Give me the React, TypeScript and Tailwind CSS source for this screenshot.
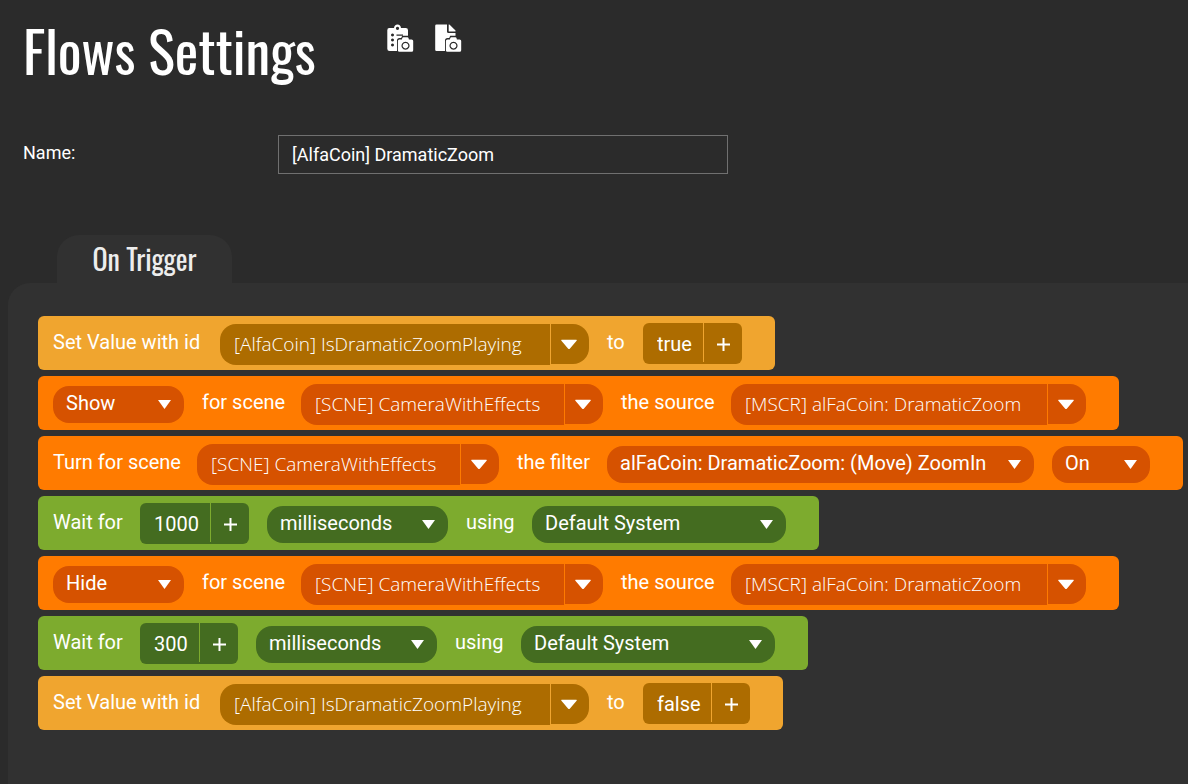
import React from "react";

type Tone = "amber" | "orange" | "green";

const rowTone: Record<Tone, string> = {
  amber: "bg-[#f0a52f]",
  orange: "bg-[#ff7b00]",
  green: "bg-[#7dab2e]",
};

const fieldTone: Record<Tone, string> = {
  amber: "bg-[#ad6c00]",
  orange: "bg-[#d65200]",
  green: "bg-[#446c20]",
};

const dividerTone: Record<Tone, string> = {
  amber: "border-[#f0a52f]",
  orange: "border-[#ff7b00]",
  green: "border-[#7dab2e]",
};

const ToneContext = React.createContext<Tone>("amber");

function Row({ tone, children }: { tone: Tone; children: React.ReactNode }) {
  return (
    <ToneContext.Provider value={tone}>
      <li
        className={`flex h-[54px] w-max items-center gap-[18px] rounded-md pr-[33px] pl-[15px] ${rowTone[tone]}`}
      >
        {children}
      </li>
    </ToneContext.Provider>
  );
}

function Word({ width, children }: { width: string; children: React.ReactNode }) {
  return <span className={`pb-0.5 whitespace-nowrap ${width}`}>{children}</span>;
}

function Select({ label, value, width }: { label: string; value: string; width: string }) {
  const tone = React.useContext(ToneContext);
  return (
    <span className="relative flex items-center pt-0.5">
      <select
        aria-label={label}
        defaultValue={value}
        className={`h-[37px] appearance-none rounded-[16px] pb-0.5 pl-[13px] text-white outline-none ${width} ${fieldTone[tone]}`}
      >
        <option>{value}</option>
      </select>
      <svg
        viewBox="0 0 13 9"
        className="pointer-events-none absolute right-[13px] h-[9px] w-[13px] fill-white"
        aria-hidden="true"
      >
        <path d="M0 0h13L6.5 9z" />
      </svg>
    </span>
  );
}

function Combo({ label, value, width }: { label: string; value: string; width: string }) {
  const tone = React.useContext(ToneContext);
  return (
    <span className="flex items-start pt-0.5">
      <input
        aria-label={label}
        defaultValue={value}
        className={`h-[41px] rounded-l-[16px] pl-3.5 font-['Segoe_UI','Open_Sans',sans-serif] text-[19px] font-light text-white outline-none ${width} ${fieldTone[tone]}`}
      />
      <button
        type="button"
        aria-label={`Choose ${label}`}
        className={`flex h-10 w-[39px] items-center justify-center rounded-r-[16px] border-l pt-0.5 pr-0.5 ${fieldTone[tone]} ${dividerTone[tone]}`}
      >
        <svg viewBox="0 0 18 11" className="h-[11px] w-[18px] fill-white" aria-hidden="true">
          <path d="M1.8 0.8h14.4q1.2 0 .4 1L10 9.6q-1 1-2 0L1.4 1.8q-.8-1 .4-1z" />
        </svg>
      </button>
    </span>
  );
}

function Value({ label, value, width }: { label: string; value: string; width: string }) {
  const tone = React.useContext(ToneContext);
  return (
    <span className={`flex h-[41px] overflow-hidden rounded-md ${fieldTone[tone]}`}>
      <input
        aria-label={label}
        defaultValue={value}
        className={`bg-transparent pt-0.5 pl-3.5 text-white outline-none ${width}`}
      />
      <button
        type="button"
        aria-label={`Add to ${label}`}
        className={`flex h-[39px] w-[39px] items-center justify-center border-l ${dividerTone[tone]}`}
      >
        <svg viewBox="0 0 13 13" className="mt-1 h-[13px] w-[13px] fill-white" aria-hidden="true">
          <path d="M5.5 0h2v5.5H13v2H7.5V13h-2V7.5H0v-2h5.5z" />
        </svg>
      </button>
    </span>
  );
}

function Camera() {
  return (
    <>
      <path
        d="M10 16.500 q0-2.500 2.500-2.500 h1.700 l1-2.200 h6.600 l1 2.200 H28 V29 H10z"
        fill="#2b2b2b"
      />
      <path
        fillRule="evenodd"
        d="M15.300 14.100 q.3-.8 1-.8 h4.200 q.7 0 1 .8 l.4 1.400 h2.700 q1.600 0 1.600 1.600 V26.300 q0 1.500-1.600 1.500 H12.400 q-1.500 0-1.500-1.500 v-9.200 q0-1.600 1.500-1.600 h2.500z M18.500 17.700 a4 4 0 1 0 .01 0z M18.500 18.900 a2.800 2.800 0 1 1-.01 0z"
      />
    </>
  );
}

function ClipboardCamera() {
  return (
    <svg viewBox="0 0 28 28" className="size-7 fill-white" aria-hidden="true">
      <path
        fillRule="evenodd"
        d="M2.200 4 H7 Q7.400.5 10.500.5 T14 4 h4.800 Q21 4 21 6.200 V24.800 Q21 27 18.800 27 H2.500 Q.3 27 .3 24.800 V6.200 Q.3 4 2.200 4z M10.500 2.800 a1.600 1.600 0 1 0 .01 0z M5.500 9.500 a1.500 1.500 0 1 0 .01 0z M5.500 14.500 a1.500 1.500 0 1 0 .01 0z M5.500 19.500 a1.500 1.500 0 1 0 .01 0z M9.500 10.600 H16 v1.200 H9.500z"
      />
      <Camera />
    </svg>
  );
}

function FileCamera() {
  return (
    <svg viewBox="0 0 28 28" className="size-7 fill-white" aria-hidden="true">
      <path d="M1.500.5 H12 V7.500 Q12 9 13.500 9 H20.500 V27 H1.500 Q.2 27 .2 25.700 V1.800 Q.2.5 1.500.5z" />
      <path d="M13.700.5 h.7 l6.100 6.100 v.9 h-6.800z" />
      <Camera />
    </svg>
  );
}

function ScenePair({ action }: { action: string }) {
  return (
    <Row tone="orange">
      <Select label="Visibility" value={action} width="w-[131px]" />
      <Word width="w-[81px]">for scene</Word>
      <Combo label="scene" value="[SCNE] CameraWithEffects" width="w-[263px]" />
      <Word width="w-[92px]">the source</Word>
      <Combo label="source" value="[MSCR] alFaCoin: DramaticZoom" width="w-[316px]" />
    </Row>
  );
}

function SetValue({ value, width }: { value: string; width: string }) {
  return (
    <Row tone="amber">
      <Word width="w-[149px]">Set Value with id</Word>
      <Combo label="value id" value="[AlfaCoin] IsDramaticZoomPlaying" width="w-[330px]" />
      <Word width="w-[18px]">to</Word>
      <Value label="new value" value={value} width={width} />
    </Row>
  );
}

function Wait({ amount, width }: { amount: string; width: string }) {
  return (
    <Row tone="green">
      <Word width="w-[69px]">Wait for</Word>
      <Value label="duration" value={amount} width={width} />
      <Select label="Unit" value="milliseconds" width="w-[181px]" />
      <Word width="w-[48px]">using</Word>
      <Select label="Timer" value="Default System" width="w-[254px]" />
    </Row>
  );
}

export default function App() {
  return (
    <div className="flex min-h-screen flex-col overflow-x-hidden bg-[#2b2b2b] font-['Roboto',sans-serif] text-[20px] leading-6 text-white">
      <header className="flex items-start gap-[71px] pl-[23px]">
        <h1 className="pt-[18px] font-['Oswald','Roboto_Condensed','Liberation_Sans_Narrow',sans-serif] text-[56px] leading-16 whitespace-nowrap">
          Flows Settings
        </h1>
        <div className="flex gap-5 pt-6">
          <button type="button" aria-label="Clipboard snapshot">
            <ClipboardCamera />
          </button>
          <button type="button" aria-label="File snapshot">
            <FileCamera />
          </button>
        </div>
      </header>

      <div className="mt-[53px] flex items-start pl-[23px] text-[18px]">
        <label htmlFor="flow-name" className="w-[255px] pt-1.5">
          Name:
        </label>
        <input
          id="flow-name"
          defaultValue="[AlfaCoin] DramaticZoom"
          className="h-[39px] w-[450px] border border-[#707070] bg-transparent px-[13px] text-white outline-none"
        />
      </div>

      <div className="mt-[61px] ml-[57px] flex">
        <h2 className="flex h-12 w-[175px] justify-center rounded-t-[22px] bg-[#313131] pt-1.5 font-['Oswald','Roboto_Condensed','Liberation_Sans_Narrow',sans-serif] text-[28px] leading-9 text-[#ededed]">
          On Trigger
        </h2>
      </div>
      <main className="ml-2 grow rounded-tl-[22px] bg-[#313131] pt-[33px] pb-[54px] pl-[30px]">
        <ul className="flex flex-col gap-1.5">
          <SetValue value="true" width="w-[60px]" />
          <ScenePair action="Show" />
          <Row tone="orange">
            <Word width="w-[126px]">Turn for scene</Word>
            <Combo label="scene" value="[SCNE] CameraWithEffects" width="w-[263px]" />
            <Word width="w-[72px]">the filter</Word>
            <Select
              label="Filter"
              value="alFaCoin: DramaticZoom: (Move) ZoomIn"
              width="w-[427px]"
            />
            <Select label="State" value="On" width="w-[98px]" />
          </Row>
          <Wait amount="1000" width="w-[70px]" />
          <ScenePair action="Hide" />
          <Wait amount="300" width="w-[59px]" />
          <SetValue value="false" width="w-[68px]" />
        </ul>
      </main>
    </div>
  );
}
